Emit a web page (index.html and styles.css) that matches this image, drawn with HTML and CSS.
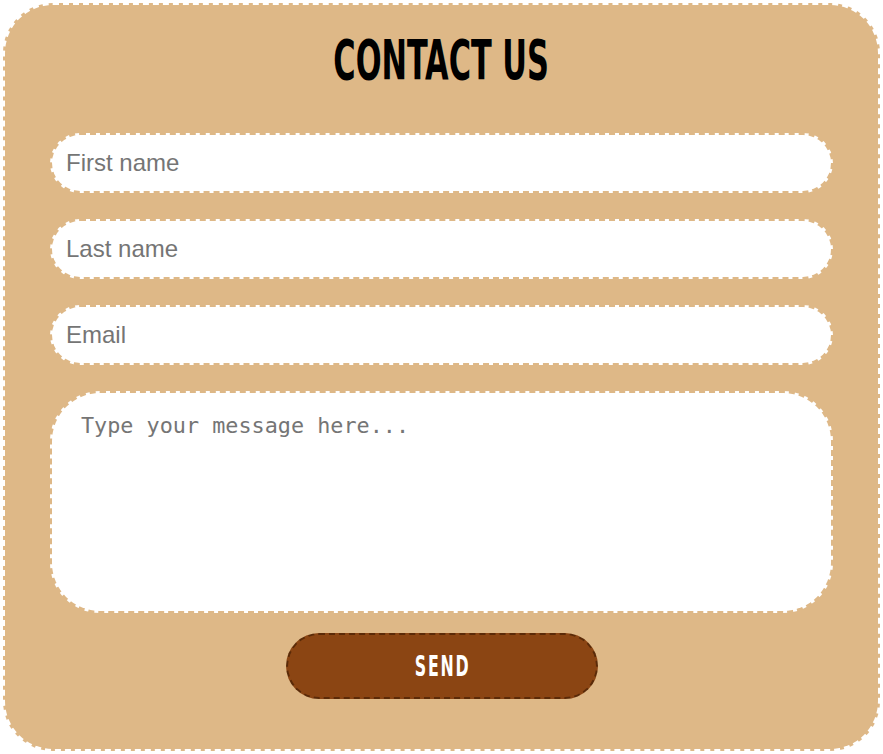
FILE: index.html
```html
<!DOCTYPE html>
<html lang="en">
<head>
<meta charset="utf-8">
<title>Contact Us</title>
<link rel="stylesheet" href="styles.css">
</head>
<body>
<div class="card">
  <h1 class="title"><span class="title-text">CONTACT US</span></h1>
  <form class="form">
    <input class="field" type="text" placeholder="First name">
    <input class="field" type="text" placeholder="Last name">
    <input class="field" type="email" placeholder="Email">
    <textarea class="message" placeholder="Type your message here..."></textarea>
    <button class="send" type="button"><span class="send-text">SEND</span></button>
  </form>
</div>
</body>
</html>
```
FILE: styles.css
```css
html, body {
  margin: 0;
  padding: 0;
  background: #ffffff;
}

.card {
  margin: 3px;
  border: 2px dashed #ffffff;
  border-radius: 50px;
  background: #deb887;
  padding: 35px 45px 50px;
}

.title {
  margin: 0 0 53px;
  height: 40px;
  line-height: 40px;
  text-align: center;
  font-family: "DejaVu Sans Condensed", "Liberation Sans", sans-serif;
  font-weight: bold;
  font-size: 38px;
  color: #000;
}

.title-text {
  display: inline-block;
  transform: scale(0.89, 1.44);
}

.form {
  display: flex;
  flex-direction: column;
  align-items: stretch;
  gap: 26px;
}

.field {
  box-sizing: border-box;
  height: 60px;
  width: 100%;
  margin: 0;
  border: 2px dashed #deb887;
  border-radius: 30px;
  background: #ffffff;
  padding: 0 14px;
  font-family: "Liberation Sans", Arial, sans-serif;
  font-size: 24px;
  color: #333;
  outline: none;
}

.field::placeholder {
  color: #757575;
}

.message {
  box-sizing: border-box;
  height: 222px;
  width: 100%;
  margin: 0;
  border: 2px dashed #deb887;
  border-radius: 50px;
  background: #ffffff;
  padding: 20px 30px 20px 29px;
  font-family: "DejaVu Sans Mono", "Liberation Mono", monospace;
  font-size: 21.8px;
  resize: none;
  outline: none;
}

.message::placeholder {
  color: #757575;
}

.send {
  box-sizing: border-box;
  align-self: center;
  margin-top: -6px;
  width: 312px;
  height: 66px;
  border: 2px dashed #5a2a08;
  border-radius: 33px;
  background: #8b4513;
  color: #ffffff;
  font-family: "DejaVu Sans Condensed", "Liberation Sans", sans-serif;
  font-weight: bold;
  font-size: 20px;
  letter-spacing: 2px;
  cursor: pointer;
}

.send-text {
  display: inline-block;
  transform: scale(0.88, 1.4);
  margin-right: -2px;
}
```
